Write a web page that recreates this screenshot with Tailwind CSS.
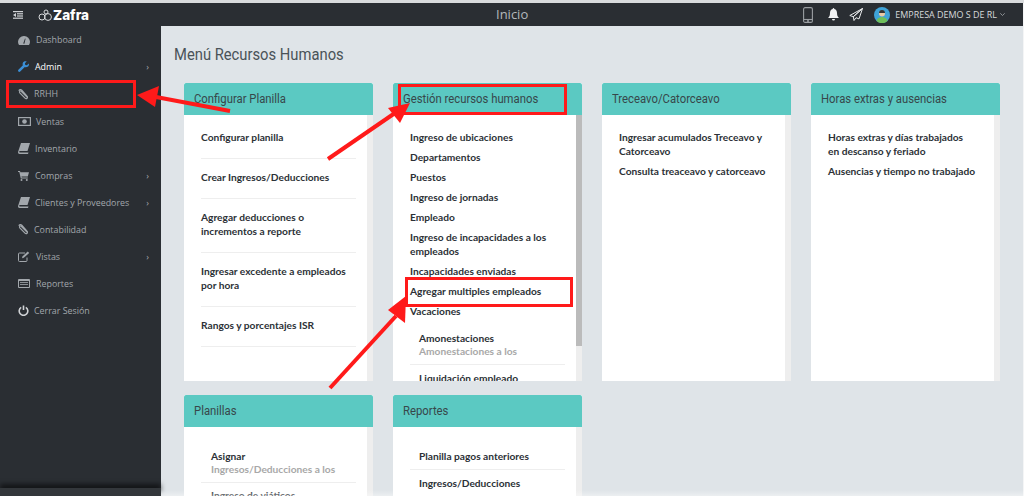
<!DOCTYPE html>
<html lang="es">
<head>
    <meta charset="UTF-8">
    <meta name="viewport" content="width=device-width, initial-scale=1.0">
    <script src="https://cdn.jsdelivr.net/npm/@tailwindcss/browser@4"></script>
    <title>Inicio</title>
</head>
<body class="h-[496px] overflow-hidden bg-[#dfe4e8] font-['Open_Sans',sans-serif]">
    <div class="relative flex h-[496px] overflow-hidden">

        <!-- sidebar -->
        <aside class="flex w-[161px] shrink-0 flex-col bg-[#2a2e33] pt-[3px] text-[8.9px] text-[#a2a7ac]">
            <div class="flex h-[24px] items-center pl-[13px]">
                <svg class="h-[8px] w-[10px]" viewBox="0 0 10 8" fill="#cfd2d5"><rect width="10" height="1.2"/><rect x="4" y="2.2" width="6" height="1.2"/><rect x="4" y="4.4" width="6" height="1.2"/><rect y="6.6" width="10" height="1.2"/><path d="M3 2v4L0 4z"/></svg>
                <svg class="ml-[15px] h-[13px] w-[14px]" viewBox="0 0 14 13" fill="none" stroke="#d8dadc" stroke-width="1"><circle cx="4" cy="8" r="3"/><circle cx="10" cy="8" r="3.4"/><circle cx="8" cy="3" r="2"/></svg>
                <span class="ml-[1px] font-['Inter',sans-serif] text-[13.5px] font-extrabold text-white">Zafra</span>
            </div>
            <nav class="flex flex-col">
                <a class="flex h-[26px] items-center pl-[18px]">
                    <svg class="h-[11px] w-[12px]" viewBox="0 0 12 11" fill="#a2a7ac"><path d="M6 1a5.8 5.8 0 0 0-6 5.8c0 1.300.4 2.400 1 3.200h10c.6-.8 1-1.900 1-3.200A5.800 5.800 0 0 0 6 1zM5.200 8.600l1.800-5 .6.200-1.200 5z"/></svg>
                    <span class="ml-[6px]">Dashboard</span>
                </a>
                <a class="flex h-[27px] items-center pl-[18px] text-white">
                    <svg class="h-[11px] w-[11px]" viewBox="0 0 11 11" fill="#3b8fd6"><path d="M10.800 2.500 8.900 4.300 7.300 3.900 6.900 2.300 8.700.4C7.300-.2 5.700.3 5 1.500c-.5.900-.5 1.900-.1 2.700L.4 8.700c-.5.500-.5 1.300 0 1.800s1.300.5 1.800 0L6.800 6c.9.400 1.900.3 2.700-.2 1.200-.7 1.800-2.100 1.300-3.300z"/></svg>
                    <span class="ml-[6px]">Admin</span>
                    <span class="ml-auto mr-[12px] text-[#a2a7ac]">›</span>
                </a>
                <a class="flex h-[28px] items-center pl-[18px]">
                    <svg class="h-[11px] w-[10px]" viewBox="0 0 10 11" fill="none" stroke="#a2a7ac" stroke-width="1.200"><path d="M9 8 3.500 2.500C2.500 1.200 .8 2.500 1.800 3.800L7 9.200C8.400 10.600 10.400 8.600 9 7.200L3.800 1.200C2.800.2 1.300.6.800 1.800"/></svg>
                    <span class="ml-[6px]">RRHH</span>
                </a>
                <a class="flex h-[27px] items-center pl-[18px]">
                    <svg class="h-[9px] w-[13px]" viewBox="0 0 13 9"><rect width="13" height="9" fill="#a2a7ac"/><rect x="1.200" y="1.200" width="10.600" height="6.600" fill="#2a2e33"/><circle cx="6.500" cy="4.500" r="2.300" fill="#a2a7ac"/></svg>
                    <span class="ml-[5px]">Ventas</span>
                </a>
                <a class="flex h-[27px] items-center pl-[18px]">
                    <svg class="h-[11px] w-[12px]" viewBox="0 0 12 11" fill="#a2a7ac"><path d="M3 0h9L9.500 8H1.800C1 8 1 9.500 1.800 9.500H10.500L10 11H1.500C.3 11-.3 9.700.2 8.500z"/></svg>
                    <span class="ml-[5px]">Inventario</span>
                </a>
                <a class="flex h-[27px] items-center pl-[18px]">
                    <svg class="h-[10px] w-[11px]" viewBox="0 0 11 10" fill="#a2a7ac"><path d="M0 0h2l.4 1.200H11L9.800 5.600H3.500l.2 1h6.100v1H2.800L1.300 1H0z"/><circle cx="3.500" cy="9" r="1"/><circle cx="8.800" cy="9" r="1"/></svg>
                    <span class="ml-[6px]">Compras</span>
                    <span class="ml-auto mr-[12px]">›</span>
                </a>
                <a class="flex h-[27px] items-center pl-[18px]">
                    <svg class="h-[11px] w-[12px]" viewBox="0 0 12 11" fill="#a2a7ac"><path d="M3 0h9L9.500 8H1.800C1 8 1 9.500 1.800 9.500H10.500L10 11H1.500C.3 11-.3 9.700.2 8.500z"/></svg>
                    <span class="ml-[5px]">Clientes y Proveedores</span>
                    <span class="ml-auto mr-[12px]">›</span>
                </a>
                <a class="flex h-[27px] items-center pl-[18px]">
                    <svg class="h-[11px] w-[10px]" viewBox="0 0 10 11" fill="none" stroke="#a2a7ac" stroke-width="1.200"><path d="M9 8 3.500 2.500C2.500 1.200 .8 2.500 1.800 3.800L7 9.200C8.400 10.600 10.400 8.600 9 7.200L3.800 1.200C2.800.2 1.300.6.800 1.800"/></svg>
                    <span class="ml-[6px]">Contabilidad</span>
                </a>
                <a class="flex h-[27px] items-center pl-[18px]">
                    <svg class="h-[11px] w-[12px]" viewBox="0 0 12 11" fill="none" stroke="#a2a7ac"><path d="M9 6.500V9.500a1 1 0 0 1-1 1H1.500a1 1 0 0 1-1-1V3a1 1 0 0 1 1-1H7"/><path d="M4 7.200l.4-1.800L9.800.6l1.400 1.400-5.400 4.800z" fill="#a2a7ac" stroke="none"/></svg>
                    <span class="ml-[6px]">Vistas</span>
                    <span class="ml-auto mr-[12px]">›</span>
                </a>
                <a class="flex h-[27px] items-center pl-[18px]">
                    <svg class="h-[9px] w-[12px]" viewBox="0 0 12 9"><rect width="12" height="9" rx="1" fill="#a2a7ac"/><rect x="1" y="2" width="10" height="6" fill="#2a2e33"/><rect x="2" y="3.200" width="8" height=".8" fill="#a2a7ac"/><rect x="2" y="5.200" width="8" height=".8" fill="#a2a7ac"/></svg>
                    <span class="ml-[6px]">Reportes</span>
                </a>
                <a class="flex h-[27px] items-center pl-[18px]">
                    <svg class="h-[11px] w-[11px]" viewBox="0 0 11 11" fill="none" stroke="#d0d3d6" stroke-width="1.600"><path d="M3.200 2.400a4.300 4.300 0 1 0 4.600 0"/><path d="M5.500 .5v4.500"/></svg>
                    <span class="ml-[5px]">Cerrar Sesión</span>
                </a>
            </nav>
            <div class="mt-auto h-[8px] bg-[#33373b] shadow-[0_-4px_5px_rgba(0,0,0,0.55)]"></div>
        </aside>

        <!-- main -->
        <div class="flex min-w-0 flex-1 flex-col">
            <header class="mt-[3px] flex h-[23px] shrink-0 items-center bg-[#2a2e33] text-[#b4b8bc]">
                <span class="ml-[335px] text-[13px]">Inicio</span>
                <div class="ml-auto flex items-center pr-[19px]">
                    <svg class="h-[16px] w-[10px]" viewBox="0 0 10 16" fill="none" stroke="#9a9ea2" stroke-width="1.100"><rect x=".6" y=".6" width="8.800" height="14.800" rx="1.500"/><path d="M.6 12.500h8.800"/><circle cx="5" cy="14" r=".5"/></svg>
                    <svg class="ml-[15px] h-[13px] w-[11px]" viewBox="0 0 11 13" fill="#f1f2f3"><path d="M5.500 0c.5 0 .8.400.8.900C8.300 1.300 9 3 9 5c0 3 1 4 2 5H0c1-1 2-2 2-5 0-2 .7-3.700 2.700-4.100C4.700.4 5 0 5.500 0z"/><path d="M4 11h3a1.500 1.500 0 0 1-3 0z"/></svg>
                    <svg class="ml-[10px] h-[13px] w-[14px]" viewBox="0 0 14 13" fill="none" stroke="#e8e9ea"><path d="M13.500.5.800 7.500l3.500 1.200zM13.500.5 4.300 8.700 5 12.500l2-2.800 3 1.200z"/></svg>
                    <svg class="ml-[11px] h-[16px] w-[16px]" viewBox="0 0 16 16"><circle cx="8" cy="8" r="8" fill="#3fa3d8"/><path d="M2.500 14c.6-3 3-4 5.500-4s4.900 1 5.500 4A8 8 0 0 1 2.500 14z" fill="#6fbf5a"/><circle cx="8" cy="6.500" r="3" fill="#e9c9a6"/><path d="M5 6a3 3 0 0 1 6 0z" fill="#333"/></svg>
                    <span class="ml-[5px] text-[8.950px] text-[#d8dadc]">EMPRESA DEMO S DE RL</span>
                    <svg class="ml-[3px] h-[3px] w-[5px]" viewBox="0 0 5 3" fill="none" stroke="#b4b8bc" stroke-width=".7"><path d="M.3.300 2.500 2.500 4.700.3"/></svg>
                </div>
            </header>

            <div class="min-h-0 flex-1 pl-[13px] pt-[19px] font-['Lato',sans-serif]">
                <h1 class="origin-left scale-x-[.895] font-['Roboto',sans-serif] text-[16.5px] leading-[20px] text-[#4a5358]">Menú Recursos Humanos</h1>
                <div class="ml-[10px] mt-[18px] grid w-[816px] grid-cols-[189px_189px_189px_189px] grid-rows-[298px_298px] gap-x-[20px] gap-y-[14px]">

                    <section class="flex flex-col overflow-hidden bg-white">
                        <h2 class="flex h-[32px] shrink-0 items-center rounded-t-[2px] bg-[#5bc9c2] pl-[10px] font-['Roboto',sans-serif] text-[12.5px] text-[#37474a]"><span class="origin-left scale-x-[.905]">Configurar Planilla</span></h2>
                        <div class="flex min-h-0 flex-1">
                            <ul class="flex-1 pl-[17px] pr-[11px] pt-[4px] text-[10.200px] font-bold leading-[14px] text-[#2c3136]">
                                <li class="border-b border-[#eeeeee] pb-[14px] pt-[11px]">Configurar planilla</li>
                                <li class="border-b border-[#eeeeee] pb-[14px] pt-[11px]">Crear Ingresos/Deducciones</li>
                                <li class="border-b border-[#eeeeee] pb-[14px] pt-[11px]">Agregar deducciones o<br>incrementos a reporte</li>
                                <li class="border-b border-[#eeeeee] pb-[14px] pt-[11px]">Ingresar excedente a empleados<br>por hora</li>
                                <li class="border-b border-[#eeeeee] pb-[14px] pt-[11px]">Rangos y porcentajes ISR</li>
                            </ul>
                            <div class="w-[6px] bg-[#eeeeee]"></div>
                        </div>
                    </section>

                    <section class="flex flex-col overflow-hidden bg-white">
                        <h2 class="flex h-[32px] shrink-0 items-center rounded-t-[2px] bg-[#5bc9c2] pl-[10px] font-['Roboto',sans-serif] text-[12.5px] text-[#37474a]"><span class="origin-left scale-x-[.905]">Gestión recursos humanos</span></h2>
                        <div class="flex min-h-0 flex-1">
                            <div class="flex-1 overflow-hidden pl-[17px] pr-[11px] pt-[15px] text-[10.200px] font-bold leading-[14px] text-[#2c3136]">
                                <ul class="flex flex-col gap-[6px]">
                                    <li>Ingreso de ubicaciones</li>
                                    <li>Departamentos</li>
                                    <li>Puestos</li>
                                    <li>Ingreso de jornadas</li>
                                    <li>Empleado</li>
                                    <li>Ingreso de incapacidades a los<br>empleados</li>
                                    <li>Incapacidades enviadas</li>
                                    <li>Agregar multiples empleados</li>
                                    <li>Vacaciones</li>
                                </ul>
                                <ul class="mt-[14px]">
                                    <li class="border-b border-[#eeeeee] pb-[6px] pl-[9px] leading-[13px]">Amonestaciones<br><span class="text-[#a8a8a8]">Amonestaciones a los</span></li>
                                    <li class="pl-[9px] pt-[6px]">Liquidación empleado</li>
                                </ul>
                            </div>
                            <div class="w-[6px] bg-[#eeeeee]"><div class="h-[231px] bg-[#bbbbbb]"></div></div>
                        </div>
                    </section>

                    <section class="flex flex-col overflow-hidden bg-white">
                        <h2 class="flex h-[32px] shrink-0 items-center rounded-t-[2px] bg-[#5bc9c2] pl-[10px] font-['Roboto',sans-serif] text-[12.5px] text-[#37474a]"><span class="origin-left scale-x-[.905]">Treceavo/Catorceavo</span></h2>
                        <div class="flex min-h-0 flex-1">
                            <ul class="flex flex-1 flex-col gap-[6px] pl-[17px] pr-[11px] pt-[15px] text-[10.200px] font-bold leading-[14px] text-[#2c3136]">
                                <li>Ingresar acumulados Treceavo y<br>Catorceavo</li>
                                <li>Consulta treaceavo y catorceavo</li>
                            </ul>
                            <div class="w-[6px] bg-[#eeeeee]"></div>
                        </div>
                    </section>

                    <section class="flex flex-col overflow-hidden bg-white">
                        <h2 class="flex h-[32px] shrink-0 items-center rounded-t-[2px] bg-[#5bc9c2] pl-[10px] font-['Roboto',sans-serif] text-[12.5px] text-[#37474a]"><span class="origin-left scale-x-[.905]">Horas extras y ausencias</span></h2>
                        <div class="flex min-h-0 flex-1">
                            <ul class="flex flex-1 flex-col gap-[6px] pl-[17px] pr-[11px] pt-[15px] text-[10.200px] font-bold leading-[14px] text-[#2c3136]">
                                <li>Horas extras y días trabajados<br>en descanso y feriado</li>
                                <li>Ausencias y tiempo no trabajado</li>
                            </ul>
                            <div class="w-[6px] bg-[#eeeeee]"></div>
                        </div>
                    </section>

                    <section class="flex flex-col overflow-hidden bg-white">
                        <h2 class="flex h-[32px] shrink-0 items-center rounded-t-[2px] bg-[#5bc9c2] pl-[10px] font-['Roboto',sans-serif] text-[12.5px] text-[#37474a]"><span class="origin-left scale-x-[.905]">Planillas</span></h2>
                        <div class="flex min-h-0 flex-1">
                            <ul class="flex-1 pl-[17px] pr-[11px] pt-[23px] text-[10.200px] font-bold leading-[13px] text-[#2c3136]">
                                <li class="border-b border-[#eeeeee] pb-[6px] pl-[10px]">Asignar<br><span class="text-[#a8a8a8]">Ingresos/Deducciones a los</span></li>
                                <li class="pl-[10px] pt-[6px]">Ingreso de viáticos</li>
                            </ul>
                            <div class="w-[6px] bg-[#eeeeee]"></div>
                        </div>
                    </section>

                    <section class="flex flex-col overflow-hidden bg-white">
                        <h2 class="flex h-[32px] shrink-0 items-center rounded-t-[2px] bg-[#5bc9c2] pl-[10px] font-['Roboto',sans-serif] text-[12.5px] text-[#37474a]"><span class="origin-left scale-x-[.905]">Reportes</span></h2>
                        <div class="flex min-h-0 flex-1">
                            <ul class="flex-1 pl-[17px] pr-[11px] pt-[23px] text-[10.200px] font-bold leading-[13px] text-[#2c3136]">
                                <li class="border-b border-[#eeeeee] pb-[6px] pl-[9px]">Planilla pagos anteriores</li>
                                <li class="pl-[9px] pt-[7px]">Ingresos/Deducciones</li>
                            </ul>
                            <div class="w-[6px] bg-[#eeeeee]"></div>
                        </div>
                    </section>
                </div>
            </div>
        </div>

        <!-- bordes de la captura -->
        <div class="absolute bottom-0 right-0 top-[3px] w-[1px] bg-[#f4f5f6]"></div>
        <div class="absolute left-0 right-0 top-0 h-[3px] bg-[#d9dbdd]"></div>
        <div class="absolute bottom-0 left-[161px] right-0 h-[6px] bg-gradient-to-b from-transparent to-white/40"></div>

        <!-- anotaciones rojas -->
        <div class="absolute left-[6px] top-[80px] h-[28px] w-[130px] border-[3px] border-[#ff1a1a]"></div>
        <div class="absolute left-[398px] top-[84px] h-[31px] w-[169px] border-[3px] border-[#ff1a1a]"></div>
        <div class="absolute left-[405px] top-[277px] h-[30px] w-[168px] border-[3px] border-[#ff1a1a]"></div>
        <svg class="absolute left-0 top-0 h-[496px] w-[1024px]" viewBox="0 0 1024 496" fill="#ff1a1a" stroke="none">
            <path d="M230 111 156 97" stroke="#ff1a1a" stroke-width="4" fill="none"/>
            <path d="M137 95 159 86 155 107z"/>
            <path d="M328 159 395 113" stroke="#ff1a1a" stroke-width="4" fill="none"/>
            <path d="M410 103 388 108 400 123z"/>
            <path d="M330 388 396 316" stroke="#ff1a1a" stroke-width="4" fill="none"/>
            <path d="M406 296 388 310 405 323z"/>
        </svg>
    </div>
</body>
</html>
